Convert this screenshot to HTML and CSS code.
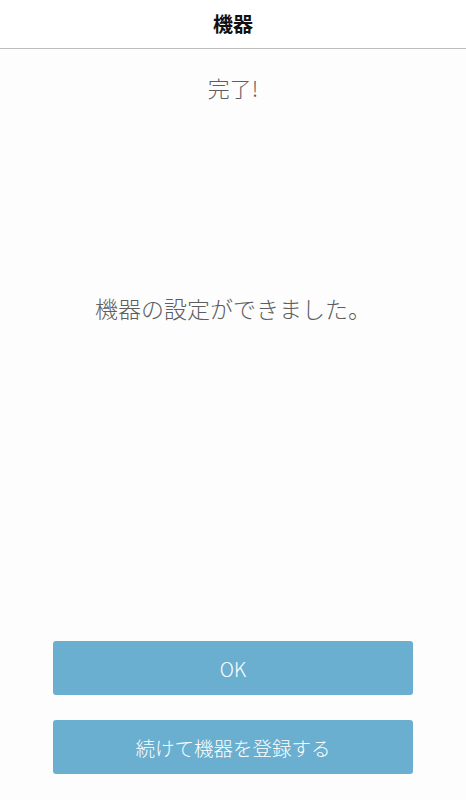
FILE: index.html
```html
<!DOCTYPE html>
<html lang="ja">
<head>
<meta charset="utf-8">
<title>機器</title>
<link rel="stylesheet" href="styles.css">
</head>
<body>
<div class="page">
  <header class="topbar">
    <h1 class="topbar-title">機器</h1>
  </header>
  <main class="content">
    <p class="status">完了!</p>
    <p class="message">機器の設定ができました。</p>
    <div class="spacer"></div>
    <div class="actions">
      <button class="btn" type="button">OK</button>
      <button class="btn" type="button">続けて機器を登録する</button>
    </div>
  </main>
</div>
</body>
</html>
```
FILE: styles.css
```css
html, body {
  margin: 0;
  padding: 0;
  background: #fdfdfd;
}
body {
  font-family: "Noto Sans CJK JP", "Noto Sans", sans-serif;
}
.page {
  width: 466px;
  height: 800px;
  display: flex;
  flex-direction: column;
}
.topbar {
  height: 48px;
  border-bottom: 1px solid #bdbdbd;
  display: flex;
  align-items: center;
  justify-content: center;
  background: #ffffff;
  flex: none;
}
.topbar-title {
  margin: 0;
  font-size: 20px;
  line-height: 22px;
  font-weight: 700;
  color: #111111;
}
.content {
  flex: 1;
  display: flex;
  flex-direction: column;
  align-items: stretch;
  padding: 0 53px 26px;
}
.status {
  margin: 27px 0 0;
  text-align: center;
  font-size: 22px;
  line-height: 22px;
  font-weight: 300;
  color: #5e5e5e;
}
.message {
  margin: 199px -40px 0;
  text-align: center;
  font-size: 23px;
  line-height: 23px;
  font-weight: 300;
  color: #5e5e5e;
}
.spacer {
  flex: 1;
}
.actions {
  display: flex;
  flex-direction: column;
  gap: 25px;
}
.btn {
  height: 54px;
  width: 100%;
  border: none;
  border-radius: 3px;
  background: #6aafd0;
  color: #ffffff;
  font-family: "Noto Sans CJK JP", "Noto Sans", sans-serif;
  font-size: 19.5px;
  font-weight: 300;
  padding: 0;
  cursor: pointer;
}
```
